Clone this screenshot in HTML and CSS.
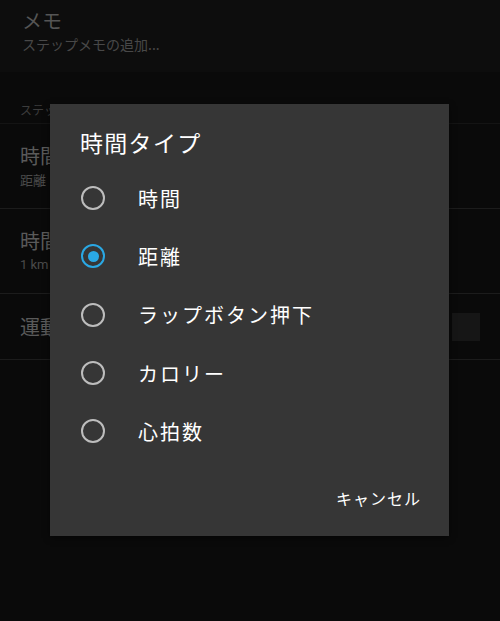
FILE: index.html
```html
<!DOCTYPE html>
<html lang="ja">
<head>
<meta charset="utf-8">
<link rel="stylesheet" href="styles.css">
</head>
<body>
<div class="page">
  <div class="memo">
    <div class="memo-title">メモ</div>
    <div class="memo-sub">ステップメモの追加...</div>
  </div>
  <div class="section-header">ステップ</div>
  <div class="row row-two">
    <div class="row-title">時間</div>
    <div class="row-sub">距離</div>
  </div>
  <div class="row row-two">
    <div class="row-title">時間</div>
    <div class="row-sub latin">1 km</div>
  </div>
  <div class="row row-one">
    <div class="row-title">運動</div>
    <div class="switch"></div>
  </div>
</div>

<div class="dialog">
  <div class="dialog-title">時間タイプ</div>
  <ul class="options">
    <li class="option"><span class="radio"></span><span class="label">時間</span></li>
    <li class="option"><span class="radio checked"></span><span class="label">距離</span></li>
    <li class="option"><span class="radio"></span><span class="label">ラップボタン押下</span></li>
    <li class="option"><span class="radio"></span><span class="label">カロリー</span></li>
    <li class="option"><span class="radio"></span><span class="label">心拍数</span></li>
  </ul>
  <div class="actions">
    <span class="btn">キャンセル</span>
  </div>
</div>
</body>
</html>
```
FILE: styles.css
```css
html, body {
  margin: 0;
  padding: 0;
}
body {
  width: 500px;
  height: 621px;
  background: #0a0a0a;
  font-family: "Noto Sans CJK JP", "Noto Sans", sans-serif;
  overflow: hidden;
  position: relative;
}
.page {
  display: flex;
  flex-direction: column;
}
.memo {
  height: 72px;
  background: #0d0d0d;
  padding: 8px 22px 0;
  box-sizing: border-box;
}
.memo-title {
  font-size: 20px;
  line-height: 26px;
  color: #555;
}
.memo-sub {
  font-size: 14px;
  line-height: 20px;
  color: #484848;
}
.section-header {
  height: 52px;
  padding: 28px 20px 0;
  box-sizing: border-box;
  font-size: 12px;
  line-height: 20px;
  color: #3c3c3c;
  border-bottom: 1px solid #141414;
}
.row {
  padding: 0 20px;
  box-sizing: border-box;
  border-bottom: 1px solid #1c1c1c;
  display: flex;
  flex-direction: column;
  justify-content: center;
}
.row-two { height: 85px; }
.row-one {
  height: 66px;
  flex-direction: row;
  align-items: center;
  justify-content: space-between;
}
.row-title {
  font-size: 20px;
  line-height: 28px;
  color: #5a5a5a;
}
.row-sub {
  font-size: 13px;
  line-height: 20px;
  color: #4a4a4a;
}
.latin { font-family: "Roboto", "Noto Sans", sans-serif; }
.switch {
  width: 28px;
  height: 28px;
  background: #161616;
}
.dialog {
  position: absolute;
  left: 50px;
  top: 104px;
  width: 399px;
  height: 432px;
  background: #363636;
  box-sizing: border-box;
  padding: 24px 28px 20px 30px;
  display: flex;
  flex-direction: column;
  box-shadow: 0 2px 6px rgba(0,0,0,0.5);
}
.dialog-title {
  font-size: 23px;
  line-height: 28px;
  color: #fff;
  letter-spacing: 1.3px;
  height: 41px;
}
.options {
  list-style: none;
  margin: 0;
  padding: 0;
}
.option {
  height: 58.3px;
  display: flex;
  align-items: center;
}
.radio {
  width: 24px;
  height: 24px;
  box-sizing: border-box;
  border: 2.5px solid #bdbdbd;
  border-radius: 50%;
  margin-left: 1px;
  margin-right: 33px;
  display: flex;
  align-items: center;
  justify-content: center;
}
.radio.checked {
  border-color: #2aa8e4;
}
.radio.checked::after {
  content: "";
  width: 11px;
  height: 11px;
  border-radius: 50%;
  background: #2aa8e4;
}
.label {
  font-size: 20px;
  color: #fff;
  letter-spacing: 2px;
}
.actions {
  margin-top: auto;
  display: flex;
  justify-content: flex-end;
}
.btn {
  font-size: 16px;
  line-height: 36px;
  color: #fff;
  letter-spacing: 1px;
}
```
